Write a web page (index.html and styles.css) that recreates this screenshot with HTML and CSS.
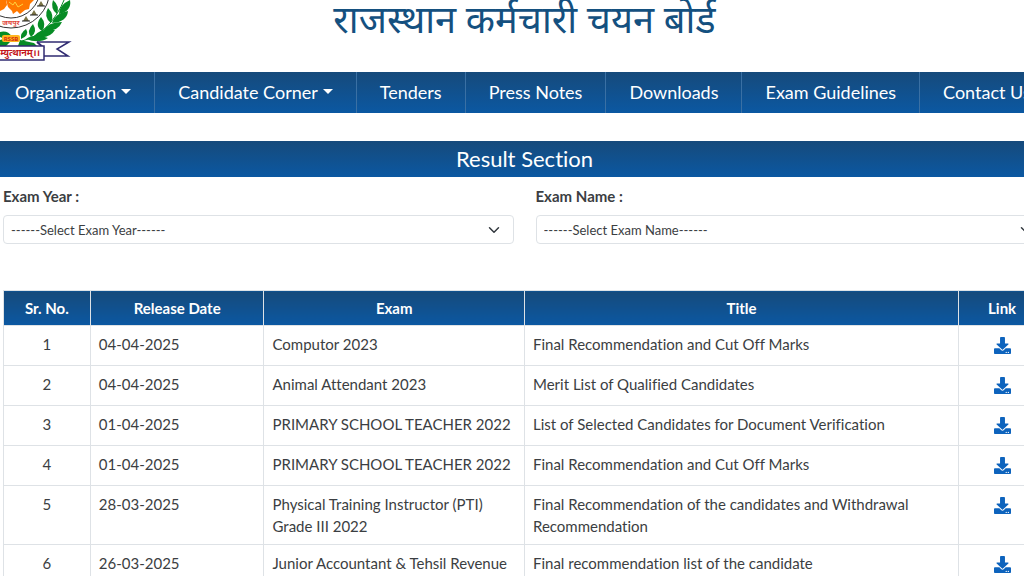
FILE: index.html
```html
<!DOCTYPE html>
<html lang="en">
<head>
    <meta charset="UTF-8">
    <meta name="viewport" content="width=device-width, initial-scale=1.0">
    <title>Result Section</title>
    <link rel="stylesheet" href="styles.css">
</head>
<body>

    <!-- icon shared by all download links -->
    <svg class="icon-defs" aria-hidden="true">
        <symbol id="download" viewBox="0 0 512 512">
            <path d="M206 0h100c13 0 24 11 24 24v168h88c18 0 27 22 14 34L270 378c-7 8-20 8-27 0L80 226c-12-12-4-34 14-34h88V24c0-13 11-24 24-24zm306 366v122c0 13-11 24-24 24H24c-13 0-24-11-24-24V366c0-13 11-24 24-24h137l59 59c20 20 52 20 72 0l59-59h137c13 0 24 11 24 24zM388 464c0-11-9-20-20-20s-20 9-20 20 9 20 20 20 20-9 20-20zm64 0c0-11-9-20-20-20s-20 9-20 20 9 20 20 20 20-9 20-20z"/>
        </symbol>
    </svg>

    <div class="page">
        <header class="header">
            <svg class="logo" viewBox="0 0 72 62" role="img" aria-label="RSSB">
                <circle cx="11" cy="-11" r="39" fill="#fff" stroke="#333" stroke-width="1"/>
                <circle cx="11" cy="-11" r="29" fill="#fff" stroke="#333" stroke-width="1"/>
                <path fill="#ff7800" d="M6 0l2 7 4 4 1 3 4-3 3 3 5-4 4-1 1-5 4-4H6z"/>
                <path fill="#ff7800" d="M0 0h6l1 5-3 4-4 2z"/>
                <path d="M9 2l4 3 2-3 3 5 5-3" fill="none" stroke="#ffd23c" stroke-width="1"/>
                <g fill="#7b7446">
                    <path d="M41 1l3 5h-6z"/>
                    <path d="M34 10l3 5h-6z"/>
                    <path d="M26 16l3 5h-6z"/>
                </g>
                <g stroke="#222" stroke-width="1">
                    <path d="M37 6h8M30 15h8M22 21h8"/>
                </g>
                <path d="M22 41Q50 34 65 -2" fill="none" stroke="#078c25" stroke-width="1"/>
                <g fill="#078c25">
                    <path d="M70 0q2 11-11 14q0-9 11-14z"/>
                    <path d="M53 0q7 6 4 14q-7-5-4-14z"/>
                    <path d="M68 11q-1 11-16 12q3-10 16-12z"/>
                    <path d="M48 8q7 7 3 15q-8-6-3-15z"/>
                    <path d="M62 22q-4 10-19 9q5-9 19-9z"/>
                    <path d="M41 17q6 7 1 14q-8-5-1-14z"/>
                    <path d="M55 30q-6 10-21 6q7-8 21-6z"/>
                    <path d="M33 24q5 8-2 13q-5-6 2-13z"/>
                    <path d="M48 38q-9 6-22 1q9-6 22-1z"/>
                    <path d="M26 29q4 6-5 10q-1-6 5-10z"/>
                    <path d="M0 32q8-2 12 5q-6 3-12 0zM0 40q7-3 12 0l-6 6H0z"/>
                    <path d="M20 40l14 3 3 3H18z"/>
                </g>
                <rect x="2" y="35" width="18" height="7" rx="2" fill="#ffb51f"/>
                <text class="logo-badge" x="11" y="41">RSSB</text>
                <text class="logo-city" x="11" y="25">जयपुर</text>
                <path d="M37 42h32l-12 7 11 7H44" fill="#fff" stroke="#302b72" stroke-width="1.5"/>
                <path d="M37 42l7 6" stroke="#302b72" stroke-width="2"/>
                <rect x="-3" y="46" width="47" height="14" fill="#fff" stroke="#302b72" stroke-width="1.5"/>
                <text class="logo-motto" x="40" y="56">म्युत्थानम्।।</text>
            </svg>
            <h1 lang="hi">राजस्थान कर्मचारी चयन बोर्ड</h1>
        </header>

        <nav class="navbar">
            <a class="dropdown" href="#">Organization</a>
            <a class="dropdown" href="#">Candidate Corner</a>
            <a href="#">Tenders</a>
            <a href="#">Press Notes</a>
            <a href="#">Downloads</a>
            <a href="#">Exam Guidelines</a>
            <a href="#">Contact Us</a>
        </nav>

        <main>
            <h2>Result Section</h2>

            <form class="filters">
                <div class="field">
                    <label for="examYear">Exam Year :</label>
                    <select id="examYear">
                        <option>------Select Exam Year------</option>
                    </select>
                </div>
                <div class="field">
                    <label for="examName">Exam Name :</label>
                    <select id="examName">
                        <option>------Select Exam Name------</option>
                    </select>
                </div>
            </form>

            <div class="results">
                <table>
                    <colgroup>
                        <col class="col-no">
                        <col class="col-date">
                        <col class="col-exam">
                        <col class="col-title">
                        <col class="col-link">
                    </colgroup>
                    <thead>
                        <tr>
                            <th>Sr. No.</th>
                            <th>Release Date</th>
                            <th>Exam</th>
                            <th>Title</th>
                            <th>Link</th>
                        </tr>
                    </thead>
                    <tbody>
                        <tr>
                            <td>1</td>
                            <td>04-04-2025</td>
                            <td>Computor 2023</td>
                            <td>Final Recommendation and Cut Off Marks</td>
                            <td><a href="#" aria-label="Download"><svg><use href="#download"/></svg></a></td>
                        </tr>
                        <tr>
                            <td>2</td>
                            <td>04-04-2025</td>
                            <td>Animal Attendant 2023</td>
                            <td>Merit List of Qualified Candidates</td>
                            <td><a href="#" aria-label="Download"><svg><use href="#download"/></svg></a></td>
                        </tr>
                        <tr>
                            <td>3</td>
                            <td>01-04-2025</td>
                            <td>PRIMARY SCHOOL TEACHER 2022</td>
                            <td>List of Selected Candidates for Document Verification</td>
                            <td><a href="#" aria-label="Download"><svg><use href="#download"/></svg></a></td>
                        </tr>
                        <tr>
                            <td>4</td>
                            <td>01-04-2025</td>
                            <td>PRIMARY SCHOOL TEACHER 2022</td>
                            <td>Final Recommendation and Cut Off Marks</td>
                            <td><a href="#" aria-label="Download"><svg><use href="#download"/></svg></a></td>
                        </tr>
                        <tr>
                            <td>5</td>
                            <td>28-03-2025</td>
                            <td>Physical Training Instructor (PTI) Grade III 2022</td>
                            <td>Final Recommendation of the candidates and Withdrawal Recommendation</td>
                            <td><a href="#" aria-label="Download"><svg><use href="#download"/></svg></a></td>
                        </tr>
                        <tr>
                            <td>6</td>
                            <td>26-03-2025</td>
                            <td>Junior Accountant &amp; Tehsil Revenue</td>
                            <td>Final recommendation list of the candidate</td>
                            <td><a href="#" aria-label="Download"><svg><use href="#download"/></svg></a></td>
                        </tr>
                    </tbody>
                </table>
            </div>
        </main>
    </div>

</body>
</html>
```
FILE: styles.css
```css
* {
    box-sizing: border-box;
}

body {
    margin: 0;
    font-family: Lato, sans-serif;
    font-size: 16px;
    font-variant-ligatures: no-common-ligatures;
    line-height: 22px;
    color: #3b3e42;
    background-color: #fff;
    overflow: hidden;
}

.icon-defs {
    display: none;
}

/* the page runs a little past the right edge of the window */
.page {
    width: calc(100% + 25px);
}

.header {
    display: grid;
    grid-template-columns: 72px 1fr 72px;
    height: 72px;
}

.logo {
    width: 72px;
    height: 62px;
}

.logo text {
    font-family: "Noto Sans Devanagari", Lato, sans-serif;
    font-weight: bold;
}

.logo-badge {
    font-size: 6px;
    fill: #d42a12;
    text-anchor: middle;
}

.logo-city {
    font-size: 7px;
    fill: #e0483c;
    text-anchor: middle;
}

.logo-motto {
    font-size: 9px;
    fill: #c4161c;
    text-anchor: end;
}

h1 {
    margin: 0;
    font-family: Lato, "Noto Sans Devanagari", sans-serif;
    font-size: 38px;
    font-weight: 400;
    line-height: 36px;
    text-align: center;
    white-space: nowrap;
    color: #14507f;
}

.navbar {
    display: flex;
    height: 41px;
    background: linear-gradient(#164a7b, #0b58a2);
}

.navbar a {
    flex: none;
    padding: 0 23px;
    border-right: 1px solid #3a70a4;
    font-size: 18px;
    line-height: 41px;
    color: #fff;
    text-decoration: none;
}

.navbar a:first-child {
    padding-left: 15px;
}

.dropdown::after {
    content: "";
    display: inline-block;
    margin-left: 5px;
    vertical-align: 5px;
    border-top: 5px solid;
    border-left: 5px solid transparent;
    border-right: 5px solid transparent;
}

h2 {
    margin: 28px 0 0;
    font-size: 22px;
    font-weight: 400;
    line-height: 36px;
    text-align: center;
    color: #fff;
    background: linear-gradient(#164a7b, #0b58a2);
}

.filters {
    display: grid;
    grid-template-columns: 1fr 1fr;
    gap: 22px;
    padding: 8px 3px 46px;
}

.field label {
    display: block;
    margin-bottom: 8px;
    font-size: 15px;
    font-weight: bold;
}

.field select {
    display: block;
    width: 100%;
    height: 29px;
    padding: 0 7px;
    border: 1px solid #dee2e6;
    border-radius: 4px;
    appearance: none;
    font-family: inherit;
    font-size: 13px;
    color: #3b3e42;
    background: #fff url("data:image/svg+xml,%3Csvg xmlns='http://www.w3.org/2000/svg' viewBox='0 0 16 16'%3E%3Cpath fill='none' stroke='%23343a40' stroke-linecap='round' stroke-linejoin='round' stroke-width='2' d='m2 5 6 6 6-6'/%3E%3C/svg%3E") no-repeat right 13px center / 12px;
}

.results {
    padding: 0 3px;
}

table {
    width: 100%;
    table-layout: fixed;
    border-collapse: collapse;
}

.col-no,
.col-link {
    width: calc(100% / 12);
}

.col-date {
    width: calc(100% / 6);
}

.col-exam {
    width: 25%;
}

th,
td {
    padding: 7px 8px;
    border: 1px solid #dee2e6;
    font-size: 15px;
    text-align: left;
    vertical-align: top;
}

th {
    line-height: 20px;
    color: #fff;
    text-align: center;
    background: linear-gradient(#164a7b, #0b58a2);
}

td:first-child,
td:last-child {
    text-align: center;
}

td a {
    display: block;
    height: 25px;
    padding-top: 4px;
    color: #0d63bd;
}

td svg {
    display: block;
    width: 17px;
    height: 17px;
    margin: 0 auto;
    fill: currentColor;
}
```
